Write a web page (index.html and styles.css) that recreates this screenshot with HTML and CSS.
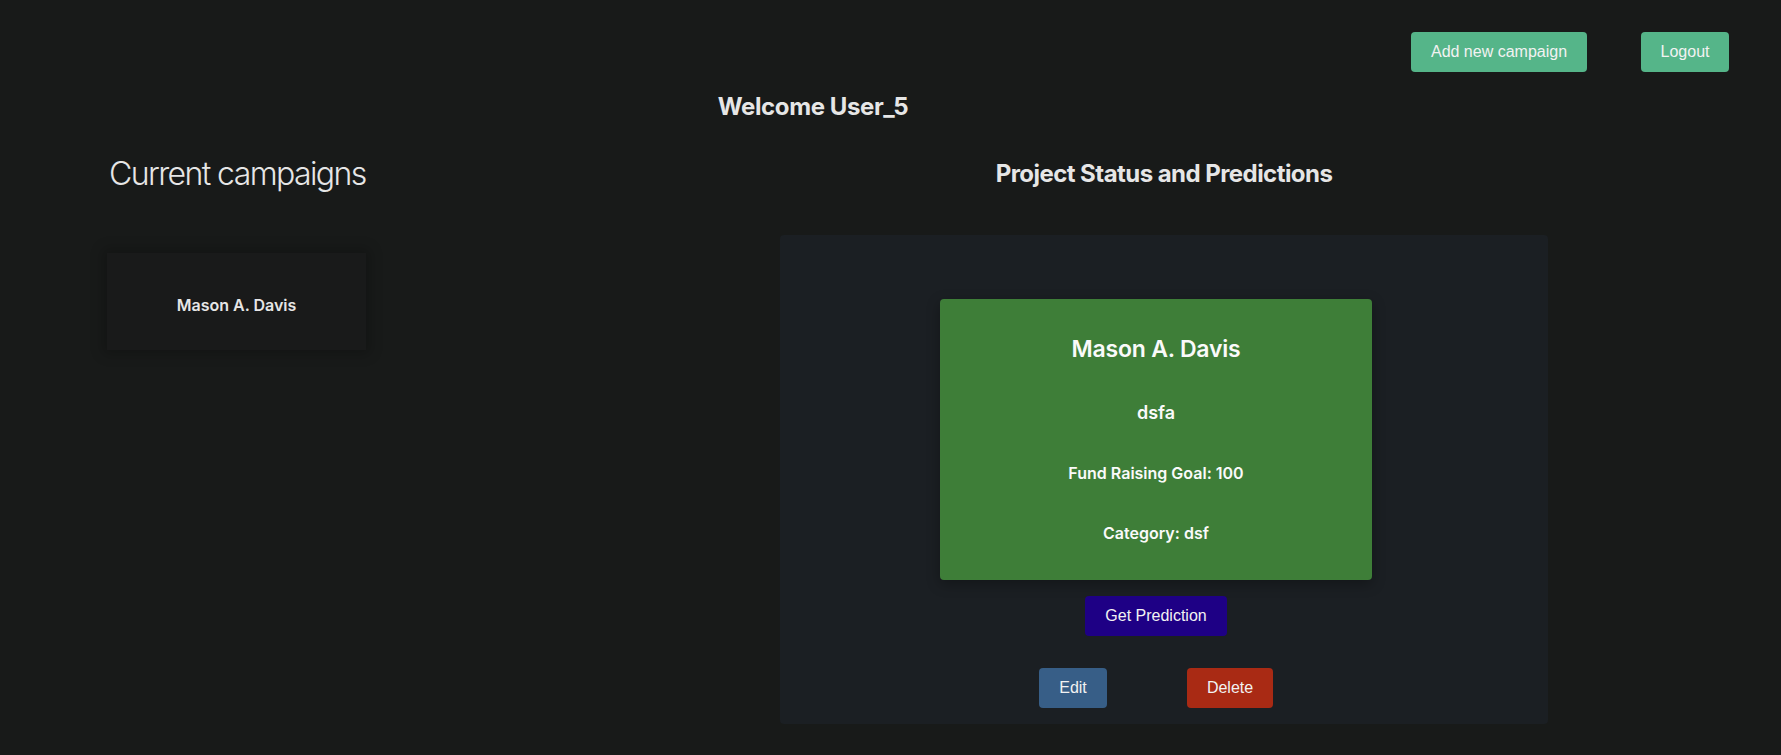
FILE: index.html
```html
<!DOCTYPE html>
<html lang="en">
<head>
<meta charset="utf-8">
<title>Campaigns</title>
<link rel="stylesheet" href="styles.css">
</head>
<body>
<header class="topbar">
  <button class="btn btn-green btn-add">Add new campaign</button>
  <button class="btn btn-green btn-logout">Logout</button>
</header>
<h2 class="welcome">Welcome User_5</h2>
<main class="main">
  <section class="left">
    <h1 class="left-title">Current campaigns</h1>
    <div class="campaign-item">Mason A. Davis</div>
  </section>
  <section class="right">
    <h2 class="right-title">Project Status and Predictions</h2>
    <div class="panel">
      <div class="status-card">
        <h2 class="sc-name">Mason A. Davis</h2>
        <h3 class="sc-desc">dsfa</h3>
        <h4 class="sc-line">Fund Raising Goal: 100</h4>
        <h4 class="sc-line">Category: dsf</h4>
      </div>
      <button class="btn btn-predict">Get Prediction</button>
      <div class="actions">
        <button class="btn btn-edit">Edit</button>
        <button class="btn btn-delete">Delete</button>
      </div>
    </div>
  </section>
</main>
</body>
</html>
```
FILE: styles.css
```css
* { box-sizing: border-box; }
html, body { margin: 0; padding: 0; }
body {
  background: #181a19;
  color: #e6e6e6;
  font-family: Inter, "Noto Sans", sans-serif;
  width: 1781px;
  height: 755px;
  overflow: hidden;
}
.btn {
  font-family: "Liberation Sans", Arial, sans-serif;
  font-size: 16px;
  color: #f2f2f2;
  border: none;
  border-radius: 4px;
  height: 40px;
  padding: 0;
  line-height: 40px;
  white-space: nowrap;
  text-align: center;
  cursor: pointer;
}
.btn-green { background: #55b589; }
.topbar {
  display: flex;
  justify-content: flex-end;
  gap: 54px;
  padding: 32px 52px 0 0;
}
.btn-add { width: 176px; }
.btn-logout { width: 88px; }
.welcome {
  margin: 20px 0 0 0;
  padding-right: 155px;
  text-align: center;
  font-size: 24px;
  font-weight: 700;
  line-height: 29px;
  height: 29px;
  letter-spacing: -0.4px;
}
.main {
  display: flex;
  padding-left: 107px;
  margin-top: 34px;
}
.left {
  width: 673px;
}
.left-title {
  margin: 0 0 0 2px;
  font-size: 32px;
  font-weight: 300;
  line-height: 38px;
  letter-spacing: -1.6px;
}
.campaign-item {
  margin-top: 60px;
  width: 259px;
  height: 97px;
  background: #191a1a;
  box-shadow: 0 0 12px 4px rgba(0,0,0,0.22);
  display: flex;
  align-items: center;
  justify-content: center;
  font-size: 16px;
  font-weight: 600;
  padding-top: 6px;
}
.right {
  width: 768px;
}
.right-title {
  margin: 4px 0 0 0;
  text-align: center;
  font-size: 24px;
  font-weight: 700;
  line-height: 29px;
  letter-spacing: -0.55px;
}
.panel {
  margin-top: 47px;
  height: 489px;
  background: #1b1f23;
  border-radius: 4px;
  padding: 64px 176px 0 160px;
  display: flex;
  flex-direction: column;
  align-items: center;
}
.status-card {
  width: 432px;
  height: 281px;
  background: #3e7e38;
  border-radius: 4px;
  box-shadow: 0 4px 14px rgba(0,0,0,0.3);
  color: #fafafa;
  display: flex;
  flex-direction: column;
  align-items: center;
  padding-top: 36px;
}
.sc-name {
  margin: 0;
  font-size: 23px;
  font-weight: 600;
  line-height: 28px;
  letter-spacing: -0.2px;
}
.sc-desc {
  margin: 39px 0 0 0;
  font-size: 18px;
  font-weight: 600;
  line-height: 22px;
}
.sc-line {
  margin: 39px 0 0 0;
  font-size: 16px;
  font-weight: 600;
  line-height: 20px;
}
.sc-line + .sc-line { margin-top: 40px; }
.btn-predict {
  margin-top: 16px;
  background: #1e0085;
  width: 142px;
}
.actions {
  margin-top: 32px;
  display: flex;
  gap: 80px;
}
.btn-edit { background: #375e87; width: 68px; }
.btn-delete { background: #a92a14; width: 86px; }
```
